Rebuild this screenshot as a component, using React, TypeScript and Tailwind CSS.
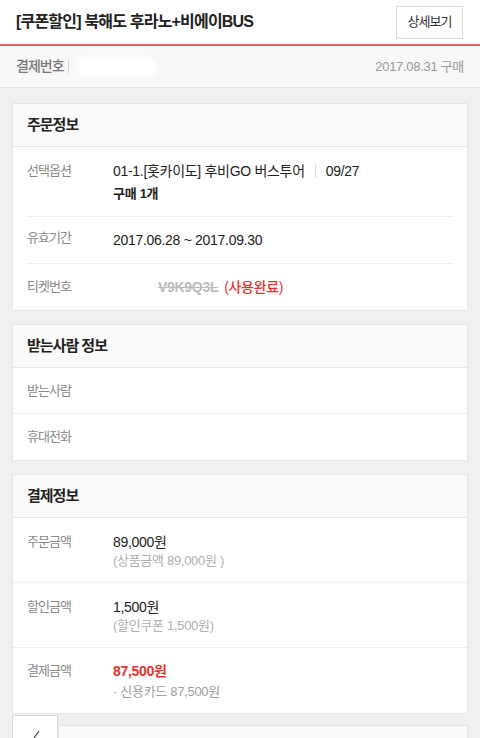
import React from 'react';

const font = { fontFamily: '"Liberation Sans", "Noto Sans CJK KR", "Noto Sans", sans-serif' };

const Row: React.FC<{ label: string; children?: React.ReactNode; className?: string }> = ({ label, children, className }) => (
  <div className={`flex px-[14px] ${className ?? ''}`}>
    <div className="w-[86px] shrink-0 text-[13px] tracking-[-1px] text-[#8a8a8a] leading-[20px]">{label}</div>
    <div className="flex-1">{children}</div>
  </div>
);

const CardHeader: React.FC<{ title: string }> = ({ title }) => (
  <div className="h-[43px] bg-[#fafafa] border-b border-[#e8e8e8] flex items-center px-[14px]">
    <h2 className="text-[15px] font-bold tracking-[-1px] text-[#222]">{title}</h2>
  </div>
);

const App: React.FC = () => {
  return (
    <div className="min-h-screen bg-[#f0f0f0]" style={font}>
      {/* top title bar */}
      <div className="h-[46px] bg-white flex items-center justify-between pl-4 pr-[17px] border-b-2 border-[#f25c5c]">
        <h1 className="text-[16px] font-semibold tracking-[-0.8px] text-[#222]">[쿠폰할인] 북해도 후라노+비에이BUS</h1>
        <button className="h-[33px] w-[67px] border border-[#d9d9d9] bg-white text-[13px] tracking-[-1px] text-[#333]">상세보기</button>
      </div>

      {/* payment number */}
      <div className="h-[42px] bg-[#f8f8f8] border-b border-[#e4e4e4] flex items-center justify-between pl-4 pr-4">
        <div className="flex items-center">
          <span className="text-[14px] font-medium tracking-[-1px] text-[#777]">결제번호</span>
          <span className="ml-1 h-[13px] w-px bg-[#d4d4d4]"></span>
          <span className="ml-2 h-[18px] w-[80px] rounded-full bg-white blur-[2px]"></span>
        </div>
        <span className="text-[13px] tracking-[-0.3px] text-[#999]">2017.08.31 구매</span>
      </div>

      <div className="px-3 pt-[15px] flex flex-col gap-[13px]">
        {/* 주문정보 */}
        <div className="bg-white border border-[#e6e6e6]">
          <CardHeader title="주문정보" />
          <div className="pt-[14px] pb-[12px]">
            <Row label="선택옵션">
              <div className="flex items-center text-[14px] tracking-[-0.3px] text-[#222] leading-[20px]">
                <span>01-1.[홋카이도] 후비GO 버스투어</span>
                <span className="mx-[10px] h-[13px] w-px bg-[#dcdcdc]"></span>
                <span>09/27</span>
              </div>
              <div className="mt-[3px] text-[13px] font-bold tracking-[-0.3px] text-[#222] leading-[20px]">구매 1개</div>
            </Row>
          </div>
          <div className="mx-[14px] border-t border-[#eeeeee]"></div>
          <div className="h-[46px] flex items-center">
            <Row label="유효기간" className="w-full">
              <span className="text-[14px] tracking-[-0.3px] text-[#222] leading-[20px]">2017.06.28 ~ 2017.09.30</span>
            </Row>
          </div>
          <div className="mx-[14px] border-t border-[#eeeeee]"></div>
          <div className="h-[46px] flex items-center">
            <Row label="티켓번호" className="w-full">
              <div className="flex items-center text-[14px] leading-[20px]">
                <span className="h-[16px] w-[42px] rounded-full bg-white blur-[2px]"></span>
                <span className="ml-[3px] text-[#bbbbbb] line-through font-bold tracking-[-0.3px]">V9K9Q3L</span>
                <span className="ml-[6px] text-[#e8332c] font-medium tracking-[-0.3px]">(사용완료)</span>
              </div>
            </Row>
          </div>
        </div>

        {/* 받는사람 정보 */}
        <div className="bg-white border border-[#e6e6e6]">
          <CardHeader title="받는사람 정보" />
          <div className="h-[46px] flex items-center border-b border-[#eeeeee]">
            <Row label="받는사람" className="w-full" />
          </div>
          <div className="h-[46px] flex items-center">
            <Row label="휴대전화" className="w-full" />
          </div>
        </div>

        {/* 결제정보 */}
        <div className="bg-white border border-[#e6e6e6]">
          <CardHeader title="결제정보" />
          <div className="h-[65px] pt-[14px] border-b border-[#eeeeee]">
            <Row label="주문금액">
              <div className="text-[14px] tracking-[-0.3px] text-[#222] leading-[20px]">89,000원</div>
              <div className="text-[13px] tracking-[-0.3px] text-[#b0b0b0] leading-[18px]">(상품금액 89,000원 )</div>
            </Row>
          </div>
          <div className="h-[65px] pt-[14px] border-b border-[#eeeeee]">
            <Row label="할인금액">
              <div className="text-[14px] tracking-[-0.3px] text-[#222] leading-[20px]">1,500원</div>
              <div className="text-[13px] tracking-[-0.3px] text-[#b0b0b0] leading-[18px]">(할인쿠폰 1,500원)</div>
            </Row>
          </div>
          <div className="h-[65px] pt-[13px]">
            <Row label="결제금액">
              <div className="text-[14px] font-semibold tracking-[-0.3px] text-[#e8332c] leading-[20px]">87,500원</div>
              <div className="mt-[2px] text-[13px] tracking-[-0.3px] text-[#a0a0a0] leading-[18px]">· 신용카드 87,500원</div>
            </Row>
          </div>
        </div>
      </div>

      {/* next section (cut off) */}
      <div className="px-3 pt-[1px] flex items-start">
        <button className="h-[40px] w-[46px] bg-white border border-[#d9d9d9] border-b-0 flex justify-center pt-[10px]">
          <svg width="14" height="16" viewBox="0 0 14 16">
            <line x1="3" y1="16" x2="11" y2="5" stroke="#444" strokeWidth="1.2" />
          </svg>
        </button>
        <div className="mt-[10px] flex-1 h-[30px] bg-[#fafafa] border border-[#e6e6e6] border-b-0"></div>
      </div>
    </div>
  );
};

export default App;
